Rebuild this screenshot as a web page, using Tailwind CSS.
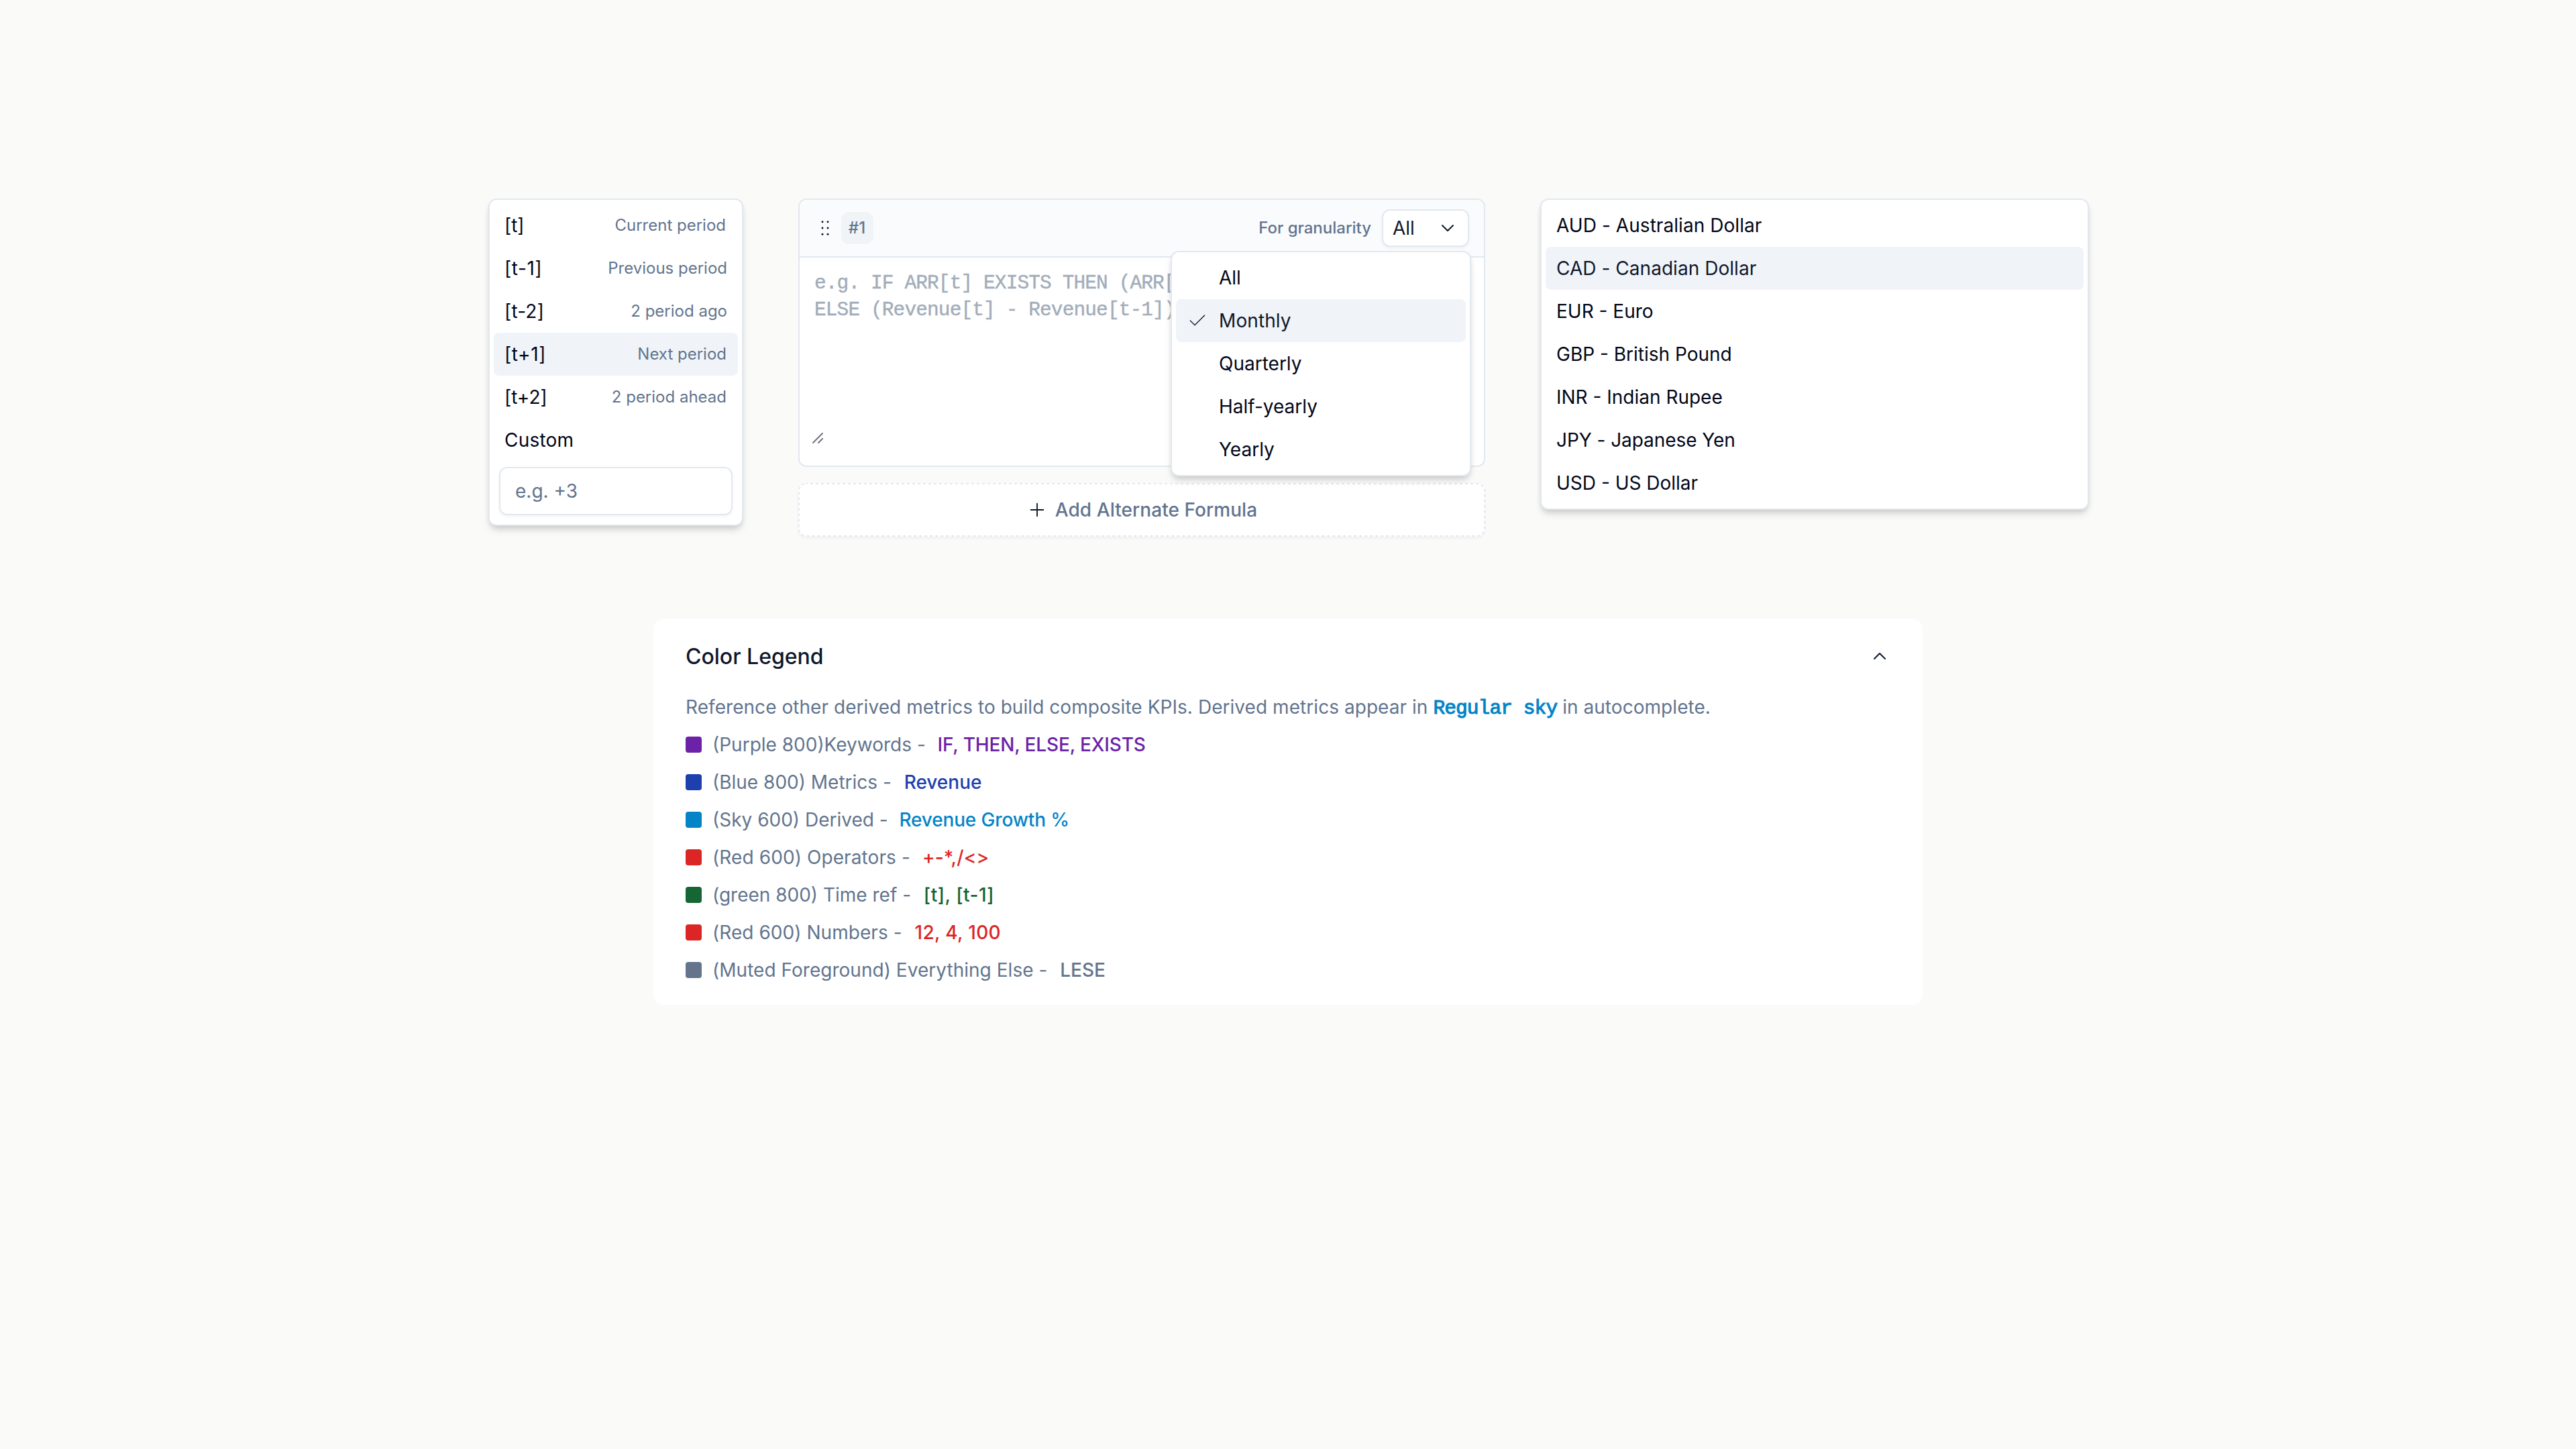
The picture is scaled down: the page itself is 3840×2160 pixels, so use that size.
<!DOCTYPE html>
<html lang="en">
<head>
<meta charset="utf-8">
<title>Formula editor components</title>
<script src="https://cdn.jsdelivr.net/npm/@tailwindcss/browser@4"></script>
</head>
<body class="w-[3840px] h-[2160px] overflow-hidden bg-[#fafaf9] font-['Inter',sans-serif] text-[28px] leading-[40px] text-[#020617]">
<main class="flex flex-col pt-[296px]">
  <div class="flex items-start pl-[728px]">

    <!-- Time period menu -->
    <section class="w-[380px] h-[488px] shrink-0 rounded-xl border-2 border-slate-200 bg-white p-[6px] shadow-[0_8px_12px_-2px_rgba(0,0,0,0.12),0_4px_8px_-3px_rgba(0,0,0,0.14)]">
      <div class="flex h-16 items-center justify-between rounded-lg px-4"><span>[t]</span><span class="pr-0.5 text-2xl text-slate-500">Current period</span></div>
      <div class="flex h-16 items-center justify-between rounded-lg px-4"><span class="tracking-[0.6px]">[t-1]</span><span class="text-2xl text-slate-500">Previous period</span></div>
      <div class="flex h-16 items-center justify-between rounded-lg px-4"><span class="tracking-[0.2px]">[t-2]</span><span class="text-2xl text-slate-500">2 period ago</span></div>
      <div class="flex h-16 items-center justify-between rounded-lg bg-[#f0f4f9] px-4"><span class="tracking-[0.6px]">[t+1]</span><span class="pr-px text-2xl text-slate-500">Next period</span></div>
      <div class="flex h-16 items-center justify-between rounded-lg px-4"><span>[t+2]</span><span class="pr-px text-2xl text-slate-500">2 period ahead</span></div>
      <div class="flex h-16 items-center rounded-lg px-4 tracking-[0.2px]">Custom</div>
      <div class="mx-2 mt-2 flex h-[72px] items-center rounded-xl border-2 border-slate-200 px-[22px] text-slate-500 shadow-[0_2px_4px_rgba(0,0,0,0.05)]">e.g. +3</div>
    </section>

    <!-- Formula editor -->
    <section class="relative ml-[82px] flex w-[1024px] shrink-0 flex-col gap-6">
      <div class="flex h-[400px] flex-col overflow-hidden rounded-xl border-2 border-slate-200 bg-white">
        <div class="flex h-[88px] shrink-0 items-center justify-between border-b-2 border-slate-200 bg-[#fafbfd] px-[22px] -mt-0.5 pt-0.5">
          <div class="flex items-center gap-2">
            <svg class="size-8" viewBox="0 0 24 24" fill="#0f172a"><circle cx="9" cy="5" r="1.1"/><circle cx="9" cy="12" r="1.1"/><circle cx="9" cy="19" r="1.1"/><circle cx="15" cy="5" r="1.1"/><circle cx="15" cy="12" r="1.1"/><circle cx="15" cy="19" r="1.1"/></svg>
            <span class="flex size-12 items-center justify-center rounded-xl bg-[#f0f4f7] pr-px text-2xl font-medium text-slate-500">#1</span>
          </div>
          <div class="flex items-center gap-4">
            <span class="text-2xl font-medium text-slate-500">For granularity</span>
            <div class="flex h-14 w-[130px] items-center justify-between rounded-xl border-2 border-slate-200 bg-white px-[14px] text-slate-900 shadow-[0_2px_4px_rgba(0,0,0,0.05)]">
              <span>All</span>
              <svg class="size-8" viewBox="0 0 24 24" fill="none" stroke="#0f172a" stroke-width="1.5" stroke-linecap="round" stroke-linejoin="round"><path d="m6 9 6 6 6-6"/></svg>
            </div>
          </div>
        </div>
        <div class="flex grow flex-col justify-between pt-[18px] pr-[22px] pb-[33px] pl-[22px]">
          <p class="whitespace-nowrap font-['Liberation_Mono',monospace] text-[29.5px] tracking-[-0.9px] text-[#a2acb9] [-webkit-text-stroke:0.4px_#a2acb9]">e.g. IF ARR[t] EXISTS THEN (ARR[<br>ELSE (Revenue[t] - Revenue[t-1])</p>
          <svg class="-ml-1 h-[17px] w-[18px]" viewBox="0 0 18 17" fill="none" stroke="#6f747e" stroke-width="2" stroke-linecap="round"><path d="M2 16 16 2M10 16l6-6"/></svg>
        </div>
      </div>
      <button class="relative flex h-20 items-center justify-center gap-[11px] rounded-xl bg-white font-medium text-slate-500 shadow-[0_2px_4px_rgba(0,0,0,0.05)]">
        <svg class="absolute inset-0 h-20 w-[1024px]" viewBox="0 0 1024 80" fill="none" stroke="#e2e8f0" stroke-width="2" stroke-dasharray="4 4" stroke-dashoffset="2"><rect x="1" y="1" width="1022" height="78" rx="11"/></svg>
        <svg class="size-8" viewBox="0 0 24 24" fill="none" stroke="#0f172a" stroke-width="1.4" stroke-linecap="round"><path d="M5 12h14M12 5v14"/></svg>
        <span class="tracking-[0.06px]">Add Alternate Formula</span>
      </button>

      <!-- Granularity options, opened over the editor -->
      <div class="absolute top-[78px] left-[555px] w-[448px] rounded-xl border-2 border-slate-200 bg-white p-[6px] shadow-[0_8px_12px_-2px_rgba(0,0,0,0.12),0_4px_8px_-3px_rgba(0,0,0,0.14)]">
        <div class="flex h-16 items-center rounded-lg pl-16">All</div>
        <div class="flex h-16 items-center gap-4 rounded-lg bg-[#f0f4f9] pl-4 tracking-[0.1px] text-slate-900">
          <svg class="size-8" viewBox="0 0 24 24" fill="none" stroke="#0f172a" stroke-width="1" stroke-linecap="round" stroke-linejoin="round"><path d="M20 6 9 17l-5-5"/></svg>
          Monthly
        </div>
        <div class="flex h-16 items-center rounded-lg pl-16">Quarterly</div>
        <div class="flex h-16 items-center rounded-lg pl-16">Half-yearly</div>
        <div class="flex h-16 items-center rounded-lg pl-16">Yearly</div>
      </div>
    </section>

    <!-- Currency menu -->
    <section class="ml-[82px] w-[818px] shrink-0 rounded-xl border-2 border-slate-200 bg-white p-[6px] shadow-[0_8px_12px_-2px_rgba(0,0,0,0.12),0_4px_8px_-3px_rgba(0,0,0,0.14)]">
      <div class="flex h-16 items-center rounded-lg px-4 tracking-[0.06px]">AUD - Australian Dollar</div>
      <div class="flex h-16 items-center rounded-lg bg-[#f0f4f9] px-4 tracking-[0.04px] text-slate-900">CAD - Canadian Dollar</div>
      <div class="flex h-16 items-center rounded-lg px-4">EUR - Euro</div>
      <div class="flex h-16 items-center rounded-lg px-4">GBP - British Pound</div>
      <div class="flex h-16 items-center rounded-lg px-4">INR - Indian Rupee</div>
      <div class="flex h-16 items-center rounded-lg px-4 tracking-[-0.06px]">JPY - Japanese Yen</div>
      <div class="flex h-16 items-center rounded-lg px-4">USD - US Dollar</div>
    </section>
  </div>

  <!-- Color legend -->
  <section class="mt-[122px] ml-[974px] flex w-[1892px] flex-col gap-4 rounded-2xl bg-white px-12 py-8 text-slate-500">
    <div class="mb-4 flex items-center justify-between">
      <h2 class="pt-px text-[32px] leading-[47px] font-medium text-slate-900">Color Legend</h2>
      <svg class="size-8" viewBox="0 0 24 24" fill="none" stroke="#0f172a" stroke-width="1.5" stroke-linecap="round" stroke-linejoin="round"><path d="m18 15-6-6-6 6"/></svg>
    </div>
    <p class="h-10 whitespace-nowrap tracking-[0.05px]">Reference other derived metrics to build composite KPIs. Derived metrics appear in <span class="font-['Liberation_Mono',monospace] text-[29.5px] leading-none tracking-[-0.9px] text-[#0284c7] [-webkit-text-stroke:1.1px_#0284c7]">Regular sky</span> in autocomplete.</p>
    <div class="flex h-10 items-center gap-4"><i class="size-6 rounded-sm bg-[#6b21a8]"></i><span class="whitespace-pre">(Purple 800)Keywords -  <b class="ml-0.5 font-medium tracking-[-0.15px] text-[#6b21a8]">IF, THEN, ELSE, EXISTS</b></span></div>
    <div class="flex h-10 items-center gap-4"><i class="size-6 rounded-sm bg-[#1e40af]"></i><span class="whitespace-pre">(Blue 800) Metrics -  <b class="ml-[3px] font-medium text-[#1e40af]">Revenue</b></span></div>
    <div class="flex h-10 items-center gap-4"><i class="size-6 rounded-sm bg-[#0284c7]"></i><span class="whitespace-pre">(Sky 600) Derived -  <b class="ml-px font-medium tracking-[-0.15px] text-[#0284c7]">Revenue Growth %</b></span></div>
    <div class="flex h-10 items-center gap-4"><i class="size-6 rounded-sm bg-[#dc2626]"></i><span class="whitespace-pre tracking-[0.1px]">(Red 600) Operators -  <b class="ml-0.5 font-medium text-[#dc2626]">+-*,/&lt;&gt;</b></span></div>
    <div class="flex h-10 items-center gap-4"><i class="size-6 rounded-sm bg-[#166534]"></i><span class="whitespace-pre">(green 800) Time ref -  <b class="ml-[3px] font-medium tracking-[0.5px] text-[#166534]">[t], [t-1]</b></span></div>
    <div class="flex h-10 items-center gap-4"><i class="size-6 rounded-sm bg-[#dc2626]"></i><span class="whitespace-pre tracking-[0.05px]">(Red 600) Numbers -  <b class="ml-[3px] font-medium tracking-[0.3px] text-[#dc2626]">12, 4, 100</b></span></div>
    <div class="flex h-10 items-center gap-4"><i class="size-6 rounded-sm bg-[#64748b]"></i><span class="whitespace-pre tracking-[0.03px]">(Muted Foreground) Everything Else -  <b class="ml-[3px] font-medium">LESE</b></span></div>
  </section>
</main>
</body>
</html>
